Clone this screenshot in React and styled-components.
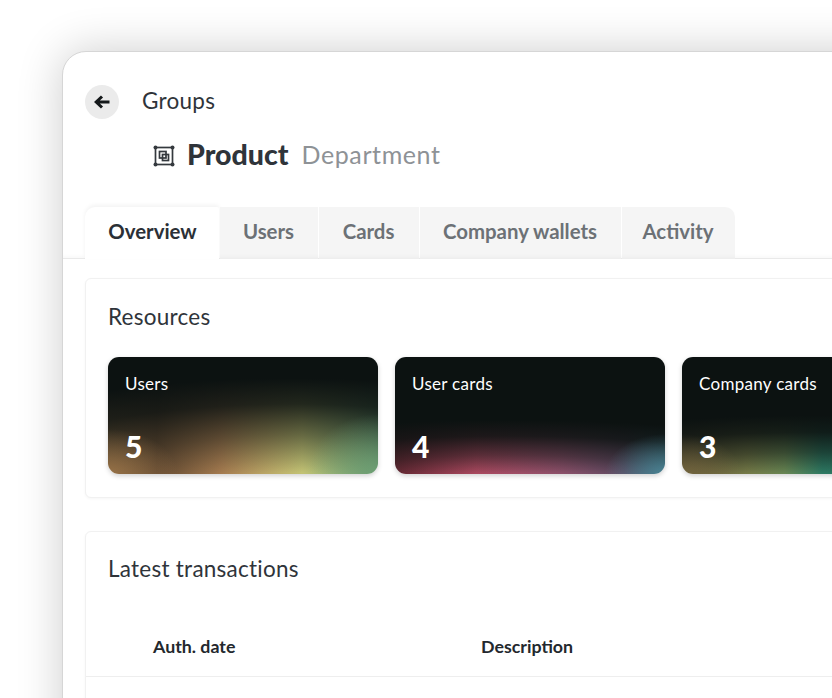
import React from "react";
import styled, { createGlobalStyle } from "styled-components";

const Global = createGlobalStyle`
  html, body { margin: 0; padding: 0; background: #fff; }
  body { font-family: "Lato", "Liberation Sans", sans-serif; color: #2b3036; }
  * { box-sizing: border-box; }
`;

const Stage = styled.div`
  width: 832px;
  height: 698px;
  overflow: hidden;
  padding: 51px 0 0 62px;
`;
const Win = styled.div`
  width: 900px;
  height: 760px;
  background: #fff;
  border: 1px solid #d6d6d6;
  border-radius: 24px 0 0 0;
  box-shadow: 0 0 46px rgba(0, 0, 0, 0.2);
`;
const BackRow = styled.div`
  display: flex;
  align-items: center;
  gap: 23px;
  padding: 33px 0 0 22px;
`;
const BackButton = styled.button`
  width: 34px;
  height: 34px;
  border: 0;
  padding: 0;
  border-radius: 50%;
  background: #ebebeb;
  display: flex;
  align-items: center;
  justify-content: center;
`;
const Crumb = styled.span`
  font-size: 22.5px;
  line-height: 32px;
  padding-bottom: 2px;
  color: #2f343a;
  letter-spacing: 0.25px;
`;
const TitleRow = styled.div`
  display: flex;
  align-items: baseline;
  padding: 17px 0 0 90px;
  height: 88px;
`;
const TitleIcon = styled.svg`
  width: 22px;
  height: 22px;
  align-self: flex-start;
  margin: 9px 12px 0 0;
`;
const Title = styled.h1`
  margin: 0 13px 0 0;
  font-size: 28.5px;
  line-height: 36px;
  font-weight: 900;
  color: #2f343a;
`;
const Subtitle = styled.span`
  font-size: 25px;
  color: #8e9296;
  letter-spacing: 0.6px;
  position: relative;
  top: -1px;
`;
const Tabs = styled.div`
  display: flex;
  gap: 1px;
  height: 52px;
  padding-left: 22px;
  border-bottom: 1px solid #e9e9e9;
  box-shadow: inset 0 -5px 5px -4px rgba(0, 0, 0, 0.04);
`;
const Tab = styled.div`
  width: ${(p) => p.$w}px;
  height: 52px;
  display: flex;
  align-items: center;
  justify-content: center;
  padding: ${(p) => (p.$first ? "0 0 4px 1px" : "0 1px 4px 0")};
  font-size: 20.4px;
  font-weight: 700;
  color: ${(p) => (p.$active ? "#2b3036" : "#6c7176")};
  background: ${(p) => (p.$active ? "#fff" : "#f5f5f5")};
  border-radius: ${(p) => (p.$first ? "10px 2px 0 0" : p.$last ? "0 10px 0 0" : "0")};
  box-shadow: ${(p) => (p.$active ? "0 -2px 4px rgba(0,0,0,0.05)" : "inset 0 -5px 5px -4px rgba(0,0,0,0.05)")};
`;
const Body = styled.div`
  padding: 19px 0 0 22px;
  display: flex;
  flex-direction: column;
  gap: 33px;
`;
const Card = styled.section`
  width: 860px;
  background: #fff;
  border: 1.5px solid #f1f1f1;
  border-radius: 6px;
  height: ${(p) => p.$h}px;
  box-shadow: 0 1px 3px rgba(0, 0, 0, 0.04);
`;
const CardTitle = styled.h2`
  margin: 0;
  padding: ${(p) => p.$top}px 0 0 22px;
  font-size: 22.5px;
  line-height: 28px;
  font-weight: 400;
  color: #2f343a;
  letter-spacing: 0.25px;
`;
const Tiles = styled.div`
  display: flex;
  gap: 17px;
  padding: 26px 0 0 22px;
`;
const Tile = styled.div`
  width: 270px;
  height: 117px;
  flex: none;
  border-radius: 11px;
  padding: 17px 17px 11px;
  color: #fff;
  display: flex;
  flex-direction: column;
  justify-content: space-between;
  background: ${(p) => p.$bg};
  box-shadow: 0 2px 5px rgba(0, 0, 0, 0.18);
`;
const TileLabel = styled.span`
  font-size: 17px;
  line-height: 20px;
  letter-spacing: 0.3px;
`;
const TileValue = styled.span`
  font-size: 30px;
  line-height: 34px;
  font-weight: 900;
`;
const TableHead = styled.div`
  display: grid;
  grid-template-columns: 328px 1fr;
  align-items: center;
  margin-top: 46px;
  height: 48px;
  padding: 0 0 13px 67px;
  border-bottom: 1.5px solid #eeeeee;
  font-size: 17.8px;
  font-weight: 700;
  color: #23282d;
`;

const d = "12,18,17";
const dark = "#0c1211";
const bgA = `radial-gradient(ellipse 70px 45px at 0% 100%, rgba(163,122,76,.8), rgba(163,122,76,0)),
  radial-gradient(ellipse 70px 60px at 100% 100%, rgba(111,162,118,.8), rgba(111,162,118,0)),
  radial-gradient(ellipse 175% 122% at 68% 128%, rgba(${d},0) 24%, rgba(${d},.5) 50%, rgba(${d},.88) 72%, ${dark} 90%),
  linear-gradient(90deg, #a37a4c 0%, #7f5c3c 18%, #b08354 42%, #c2c274 72%, #6fa276 100%)`;
const bgB = `radial-gradient(ellipse 60px 40px at 100% 100%, rgba(79,138,156,.85), rgba(79,138,156,0)),
  radial-gradient(ellipse 165% 68% at 42% 122%, rgba(${d},0) 28%, rgba(${d},.55) 56%, rgba(${d},.9) 80%, ${dark} 100%),
  linear-gradient(90deg, #82303f 0%, #bd4f68 30%, #a05a78 62%, #7b5c7c 85%, #4f8a9c 100%)`;
const bgC = `radial-gradient(ellipse 60px 40px at 0% 100%, rgba(124,108,66,.7), rgba(124,108,66,0)),
  radial-gradient(ellipse 165% 72% at 50% 122%, rgba(${d},0) 28%, rgba(${d},.55) 56%, rgba(${d},.9) 80%, ${dark} 100%),
  linear-gradient(90deg, #7c6c42 0%, #858a50 24%, #6f8f58 38%, #2f8068 52%, #2a7064 100%)`;

const tabs = [
  ["Overview", 134],
  ["Users", 98],
  ["Cards", 100],
  ["Company wallets", 201],
  ["Activity", 113],
];
const tiles = [
  ["Users", "5", bgA],
  ["User cards", "4", bgB],
  ["Company cards", "3", bgC],
];

export default function App() {
  return (
    <Stage>
      <Global />
      <Win>
        <BackRow>
          <BackButton aria-label="Back">
            <svg width="16" height="14" viewBox="0 0 16 14" fill="none">
              <path d="M15.5 7H3.5M8 1.5 2.2 7 8 12.5" stroke="#14181a" strokeWidth="3" />
            </svg>
          </BackButton>
          <Crumb>Groups</Crumb>
        </BackRow>
        <TitleRow>
          <TitleIcon viewBox="0 0 22 22" fill="none" stroke="#34393e" strokeWidth="1.7">
            <rect x="2.5" y="2.5" width="17" height="17" />
            <rect x="6.5" y="6.5" width="6.5" height="6.5" />
            <rect x="9.5" y="9.5" width="6" height="6" />
            <g fill="#34393e" stroke="none">
              <circle cx="2.5" cy="2.5" r="2" />
              <circle cx="19.5" cy="2.5" r="2" />
              <circle cx="2.5" cy="19.5" r="2" />
              <circle cx="19.5" cy="19.5" r="2" />
            </g>
          </TitleIcon>
          <Title>Product</Title>
          <Subtitle>Department</Subtitle>
        </TitleRow>
        <Tabs>
          {tabs.map(([t, w], i) => (
            <Tab key={t} $w={w} $active={i === 0} $first={i === 0} $last={i === tabs.length - 1}>
              {t}
            </Tab>
          ))}
        </Tabs>
        <Body>
          <Card $h={220}>
            <CardTitle $top={24}>Resources</CardTitle>
            <Tiles>
              {tiles.map(([l, v, bg]) => (
                <Tile key={l} $bg={bg}>
                  <TileLabel>{l}</TileLabel>
                  <TileValue>{v}</TileValue>
                </Tile>
              ))}
            </Tiles>
          </Card>
          <Card $h={300}>
            <CardTitle $top={23}>Latest transactions</CardTitle>
            <TableHead>
              <span>Auth. date</span>
              <span>Description</span>
            </TableHead>
          </Card>
        </Body>
      </Win>
    </Stage>
  );
}
